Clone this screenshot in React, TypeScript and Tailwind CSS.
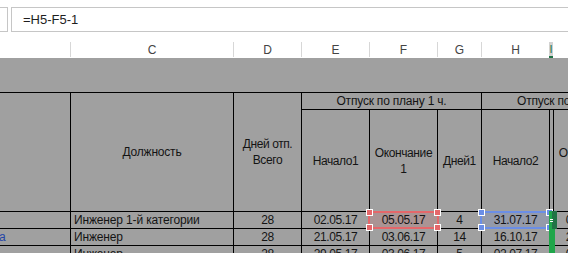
import React from "react";

const cols =
  "grid grid-cols-[70px_163px_68px_68px_68px_44px_68px_4px_68px_120px]";

function Handle({ pos, color }: { pos: string; color: string }) {
  return (
    <div
      className={`absolute w-[7px] h-[7px] border border-white ${pos} ${color}`}
    />
  );
}

function Sel({ kind }: { kind: "red" | "blue" }) {
  const border = kind === "red" ? "border-[#e5676a]" : "border-[#6b8ee6]";
  const fill = kind === "red" ? "bg-[#ff3a3a1c]" : "bg-[#3a6aff1c]";
  const hc = kind === "red" ? "bg-[#e5676a]" : "bg-[#6b8ee6]";
  return (
    <div
      className={`absolute left-[-2px] right-[-2px] top-[-1px] bottom-[-1px] border-2 ${border} ${fill} z-10`}
    >
      <Handle pos="left-[-4px] top-[-4px]" color={hc} />
      <Handle pos="right-[-4px] top-[-4px]" color={hc} />
      <Handle pos="left-[-4px] bottom-[-4px]" color={hc} />
      <Handle pos="right-[-4px] bottom-[-4px]" color={hc} />
    </div>
  );
}

export default function App() {
  const cellFont =
    "font-['Liberation_Sans',Arial,sans-serif] text-[12px] tracking-[-0.4px] text-[#141414]";
  const bt = "border-t border-black";
  const btl = "border-t border-l border-black";
  const center = "flex items-center justify-center text-center leading-[16px]";
  const data = [
    ["", "Инженер 1-й категории", "28", "02.05.17", "05.05.17", "4", "31.07.17", "", "09.08.17"],
    ["а", "Инженер", "28", "21.05.17", "03.06.17", "14", "16.10.17", "", "29.10.17"],
    ["", "Инженер", "28", "29.05.17", "03.06.17", "5", "02.07.17", "", "09.07.17"],
  ];
  return (
    <div className="w-[568px] h-[253px] overflow-hidden bg-white flex flex-col">
      {/* formula bar */}
      <div className="flex h-[42px] pt-[7px] pb-[10px] font-['Liberation_Sans',Arial,sans-serif]">
        <div className="w-[8px] border-t border-b border-r border-[#c6c6c6]" />
        <div className="ml-[3px] flex-1 border-t border-b border-l border-[#c6c6c6] flex items-center pl-[11px] text-[13px] text-[#1e1e1e]">
          =H5-F5-1
        </div>
      </div>
      {/* column headers */}
      <div
        className={`${cols} h-[16px] font-['Liberation_Sans',Arial,sans-serif] text-[12px] text-[#444]`}
      >
        <div />
        {["C", "D", "E", "F", "G", "H"].map((c) => (
          <div
            key={c}
            className="border-l border-[#d7d7d7] flex items-center justify-center mb-[1px] pt-[1px] leading-none"
          >
            {c}
          </div>
        ))}
        <div className="bg-[#d2d2d2] border-b-2 border-[#217346] flex items-center justify-center text-[11px] leading-none text-[#217346] overflow-hidden">
          I
        </div>
        <div />
        <div />
      </div>
      {/* sheet */}
      <div
        className={`${cols} grid-rows-[34px_17px_102px_17px_17px_17px] flex-1 overflow-hidden bg-[#a0a0a0] ${cellFont}`}
      >
        <div className="col-span-10" />
        {/* header rows */}
        <div className={`row-span-2 ${bt}`} />
        <div className={`row-span-2 ${btl} ${center} tracking-[-0.2px]`}>Должность</div>
        <div className={`row-span-2 ${btl} ${center}`}>
          Дней отп.
          <br />
          Всего
        </div>
        <div className={`col-span-3 ${btl} ${center} tracking-[-0.2px]`}>Отпуск по плану 1 ч.</div>
        <div className={`col-span-4 ${btl} flex items-center pl-[35px] whitespace-nowrap leading-[16px] tracking-[-0.2px]`}>
          Отпуск по плану 2 ч.
        </div>
        <div className={`${btl} ${center}`}>Начало1</div>
        <div className={`${btl} ${center}`}>
          Окончание
          <br />1
        </div>
        <div className={`${btl} ${center}`}>Дней1</div>
        <div className={`${btl} ${center}`}>Начало2</div>
        <div className={`${btl}`} />
        <div className={`${btl} ${center}`}>
          Окончание
          <br />2
        </div>
        <div className={`${btl}`} />
        {/* data rows */}
        {data.map((r, i) => (
          <React.Fragment key={i}>
            <div className={`${bt} overflow-hidden whitespace-nowrap leading-[16px] text-[#2546a8] -ml-[1px]`}>
              {r[0]}
            </div>
            <div className={`${btl} pl-[3px] whitespace-nowrap overflow-hidden leading-[16px] tracking-[-0.15px]`}>
              {r[1]}
            </div>
            <div className={`${btl} ${center}`}>{r[2]}</div>
            <div className={`${btl} ${center}`}>{r[3]}</div>
            <div className={`${btl} ${center} relative`}>
              {i === 0 && <Sel kind="red" />}
              <span className="relative z-20">{r[4]}</span>
            </div>
            <div className={`${btl} ${center}`}>{r[5]}</div>
            <div className={`${btl} ${center} relative`}>
              {i === 0 && <Sel kind="blue" />}
              <span className="relative z-20">{r[6]}</span>
            </div>
            <div className={`${btl} relative`}>
              {i === 0 && (
                <>
                  <div className="absolute left-[-1px] top-[-1px] w-[6px] h-[60px] bg-[#1fa64a] z-30" />
                  <div className="absolute left-[2px] top-[-1px] w-[5px] h-[18px] bg-[#217346] z-30" />
                  <div className="absolute left-[0px] top-[7px] w-[3px] h-[1px] bg-white z-30" />
                  <div className="absolute left-[0px] top-[9px] w-[3px] h-[1px] bg-white z-30" />
                </>
              )}
            </div>
            <div className={`${btl} ${center}`}>{r[8]}</div>
            <div className={`${btl}`} />
          </React.Fragment>
        ))}
      </div>
    </div>
  );
}
